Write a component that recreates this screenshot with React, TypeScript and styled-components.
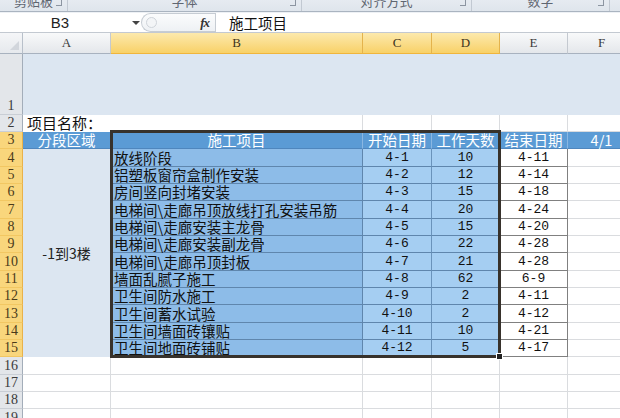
import React, { Fragment } from 'react'
import styled, { createGlobalStyle, css } from 'styled-components'

const GlobalStyle = createGlobalStyle`
  html, body { margin: 0; padding: 0; background: #fff; }
  body { width: 620px; height: 418px; overflow: hidden; font-family: "Liberation Sans", "Noto Sans CJK SC", sans-serif; }
`

const CJK = `"Noto Sans CJK SC", sans-serif`
const MONO = `"Liberation Mono", "Noto Sans CJK SC", monospace`
const SERIF = `"Liberation Serif", "Noto Sans CJK SC", serif`

const Window = styled.div`
  width: 620px;
  height: 418px;
  overflow: hidden;
  background: #fff;
  display: flex;
  flex-direction: column;
`

/* ribbon (only the group captions are still visible) */
const Ribbon = styled.div`
  flex: none;
  height: 11px;
  display: flex;
  overflow: hidden;
  background: linear-gradient(#e6ebf1, #dfe5ec);
  border-bottom: 1px solid #aab4c0;
`
const RibbonGroup = styled.div<{ $w: number }>`
  flex: none;
  width: ${p => p.$w}px;
  position: relative;
  box-sizing: border-box;
  border-right: 1px solid #c2c9d2;
  display: flex;
  justify-content: center;
`
const GroupLabel = styled.span`
  font: 13px/13px ${CJK};
  color: #5f6671;
  margin-top: -6px;
`
const Launcher = styled.span`
  position: absolute;
  right: 5px;
  top: 0;
  width: 5px;
  height: 5px;
  border-right: 1px solid #8c95a1;
  border-bottom: 1px solid #8c95a1;
`
const Gap = styled.div`
  flex: none;
  height: 1px;
  background: #eef1f5;
`

/* formula bar */
const FormulaBar = styled.div`
  flex: none;
  height: 19px;
  display: flex;
  align-items: stretch;
  background: #fff;
  border-bottom: 1px solid #c3c9d1;
`
const NameBox = styled.div`
  width: 141px;
  display: flex;
  align-items: center;
  position: relative;
  font: 15px/19px "Liberation Sans", sans-serif;
  color: #222;
`
const NameText = styled.span`
  width: 120px;
  text-align: center;
`
const Caret = styled.span`
  position: absolute;
  left: 132px;
  top: 8px;
  border-left: 4px solid transparent;
  border-right: 4px solid transparent;
  border-top: 4px solid #444;
`
const FxPill = styled.div`
  width: 74px;
  box-sizing: border-box;
  border: 1px solid #c6ccd3;
  border-right: none;
  border-radius: 10px 0 0 10px;
  background: linear-gradient(#fbfcfd, #eef1f4);
  display: flex;
  align-items: center;
  justify-content: space-between;
  padding: 0 6px 0 4px;
`
const Grip = styled.span`
  width: 9px;
  height: 9px;
  border-radius: 50%;
  border: 1px solid #cfd4da;
  background: #f3f5f7;
`
const Fx = styled.span`
  font: italic bold 13px ${SERIF};
  color: #333;
  letter-spacing: -1px;
`
const FormulaInput = styled.div`
  flex: 1;
  border-left: 1px solid #c6ccd3;
  padding-left: 13px;
  font: 14.5px/19px ${CJK};
  color: #111;
`

/* sheet */
const SheetWrap = styled.div`
  flex: 1;
  position: relative;
  overflow: hidden;
`
const Sheet = styled.div`
  position: relative;
  width: 636px;
  display: grid;
  grid-template-columns: 23px 88px 252px 69px 68px 68px 68px;
  grid-template-rows: 21px 61px 17px repeat(17, 17.33px);
`

const Corner = styled.div`
  position: relative;
  box-sizing: border-box;
  background: linear-gradient(#f5f6f8, #e6e9ed);
  border-right: 1px solid #b8c0ca;
  border-bottom: 1px solid #a8b2bf;
  &::after {
    content: '';
    position: absolute;
    right: 3px;
    bottom: 3px;
    border-left: 9px solid transparent;
    border-bottom: 9px solid #d2d6dc;
  }
`

const ColHead = styled.div<{ $sel?: boolean }>`
  box-sizing: border-box;
  display: flex;
  align-items: center;
  justify-content: center;
  font: 13px ${SERIF};
  color: #3a3a3a;
  background: linear-gradient(#f8f9fa, #e4e7eb);
  border-right: 1px solid #c4c9d0;
  border-bottom: 1px solid #a8b2bf;
  ${p => p.$sel && css`
    background: linear-gradient(#fce9ad, #f8d168);
    border-right-color: #e4b34c;
    border-bottom-color: #f0b53c;
    color: #3d3420;
  `}
`

const RowHead = styled.div<{ $sel?: boolean }>`
  box-sizing: border-box;
  display: flex;
  align-items: flex-end;
  justify-content: center;
  font: 14px/17px ${SERIF};
  color: #3a3a3a;
  background: #e3e6ea;
  border-right: 1px solid #a3adb9;
  border-bottom: 1px solid #c9ced5;
  ${p => p.$sel && css`
    background: #f9d67c;
    border-right-color: #e9b24a;
    border-bottom-color: #f2c762;
    color: #4a3a1a;
  `}
`

type Tone = 'plain' | 'band' | 'title' | 'head' | 'task' | 'num' | 'end'

const tones: Record<Tone, ReturnType<typeof css>> = {
  plain: css``,
  band: css`
    background: #dce6f1;
    border-color: #dce6f1;
  `,
  title: css`
    border-color: transparent;
    font-size: 15px;
    padding-left: 4px;
  `,
  head: css`
    background: #5b9bd5;
    color: #fff;
    border-right-color: #8ab7e2;
    border-bottom-color: #4f86bd;
  `,
  task: css`
    background: #8dbce8;
    border-right-color: #5f86ad;
    border-bottom-color: #5f86ad;
    padding-left: 3px;
  `,
  num: css`
    background: #a5cef2;
    border-right-color: #6a93bb;
    border-bottom-color: #5f86ad;
    font: 13px/17px ${MONO};
  `,
  end: css`
    border-right-color: #808080;
    border-bottom-color: #808080;
    font: 13px/17px ${MONO};
  `,
}

const Cell = styled.div<{ $tone?: Tone; $left?: boolean; $span?: number }>`
  box-sizing: border-box;
  min-width: 0;
  white-space: nowrap;
  display: flex;
  align-items: flex-end;
  justify-content: ${p => (p.$left ? 'flex-start' : 'center')};
  font: 14.5px/17px ${CJK};
  color: #111;
  border-right: 1px solid #dadcdf;
  border-bottom: 1px solid #dadcdf;
  ${p => p.$span && css`grid-row: span ${p.$span};`}
  ${p => tones[p.$tone ?? 'plain']}
`

const Floor = styled(Cell)`
  align-items: center;
  font: 14px ${CJK};
  color: #222;
  border-right-color: #dce6f1;
  border-bottom-color: #dce6f1;
`

const Selection = styled.div`
  position: absolute;
  left: 110px;
  top: 97px;
  width: 391px;
  height: 228px;
  box-sizing: border-box;
  border: 3px solid #37322c;
  pointer-events: none;
`
const FillHandle = styled.span`
  position: absolute;
  right: -5px;
  bottom: -5px;
  width: 5px;
  height: 5px;
  background: #222;
  border: 1px solid #fff;
`

const COLS = ['A', 'B', 'C', 'D', 'E', 'F']
const SELECTED = ['B', 'C', 'D']

const tasks: [string, string, number, string][] = [
  ['放线阶段', '4-1', 10, '4-11'],
  ['铝塑板窗帘盒制作安装', '4-2', 12, '4-14'],
  ['房间竖向封堵安装', '4-3', 15, '4-18'],
  ['电梯间\\走廊吊顶放线打孔安装吊筋', '4-4', 20, '4-24'],
  ['电梯间\\走廊安装主龙骨', '4-5', 15, '4-20'],
  ['电梯间\\走廊安装副龙骨', '4-6', 22, '4-28'],
  ['电梯间\\走廊吊顶封板', '4-7', 21, '4-28'],
  ['墙面乱腻子施工', '4-8', 62, '6-9'],
  ['卫生间防水施工', '4-9', 2, '4-11'],
  ['卫生间蓄水试验', '4-10', 2, '4-12'],
  ['卫生间墙面砖镶贴', '4-11', 10, '4-21'],
  ['卫生间地面砖铺贴', '4-12', 5, '4-17'],
]

const headers = ['分段区域', '施工项目', '开始日期', '工作天数', '结束日期', '4/1']

const ribbonGroups: [string, number][] = [
  ['剪贴板', 68],
  ['字体', 234],
  ['对齐方式', 170],
  ['数字', 138],
  ['', 40],
]

const App = () => {
  return (
    <Window>
      <GlobalStyle />
      <Ribbon>
        {ribbonGroups.map(([label, w], i) => (
          <RibbonGroup key={i} $w={w}>
            <GroupLabel>{label}</GroupLabel>
            {label && <Launcher />}
          </RibbonGroup>
        ))}
      </Ribbon>
      <Gap />
      <FormulaBar>
        <NameBox>
          <NameText>B3</NameText>
          <Caret />
        </NameBox>
        <FxPill>
          <Grip />
          <Fx>fx</Fx>
        </FxPill>
        <FormulaInput>施工项目</FormulaInput>
      </FormulaBar>
      <SheetWrap>
        <Sheet>
          <Corner />
          {COLS.map(c => (
            <ColHead key={c} $sel={SELECTED.includes(c)}>{c}</ColHead>
          ))}

          <RowHead>1</RowHead>
          {COLS.map(c => <Cell key={'1' + c} $tone="band" />)}

          <RowHead>2</RowHead>
          <Cell $tone="title" $left>项目名称：</Cell>
          {COLS.slice(1).map(c => <Cell key={'2' + c} />)}

          <RowHead $sel>3</RowHead>
          {headers.map(h => <Cell key={h} $tone="head">{h}</Cell>)}

          {tasks.map(([name, start, days, end], i) => (
            <Fragment key={name}>
              <RowHead $sel>{i + 4}</RowHead>
              {i === 0 && <Floor $span={12} $tone="band">-1到3楼</Floor>}
              <Cell $tone="task" $left>{name}</Cell>
              <Cell $tone="num">{start}</Cell>
              <Cell $tone="num">{days}</Cell>
              <Cell $tone="end">{end}</Cell>
              <Cell />
            </Fragment>
          ))}

          {[16, 17, 18, 19, 20].map(r => (
            <Fragment key={r}>
              <RowHead>{r}</RowHead>
              {COLS.map(c => <Cell key={r + c} />)}
            </Fragment>
          ))}

          <Selection>
            <FillHandle />
          </Selection>
        </Sheet>
      </SheetWrap>
    </Window>
  )
}

export default App
